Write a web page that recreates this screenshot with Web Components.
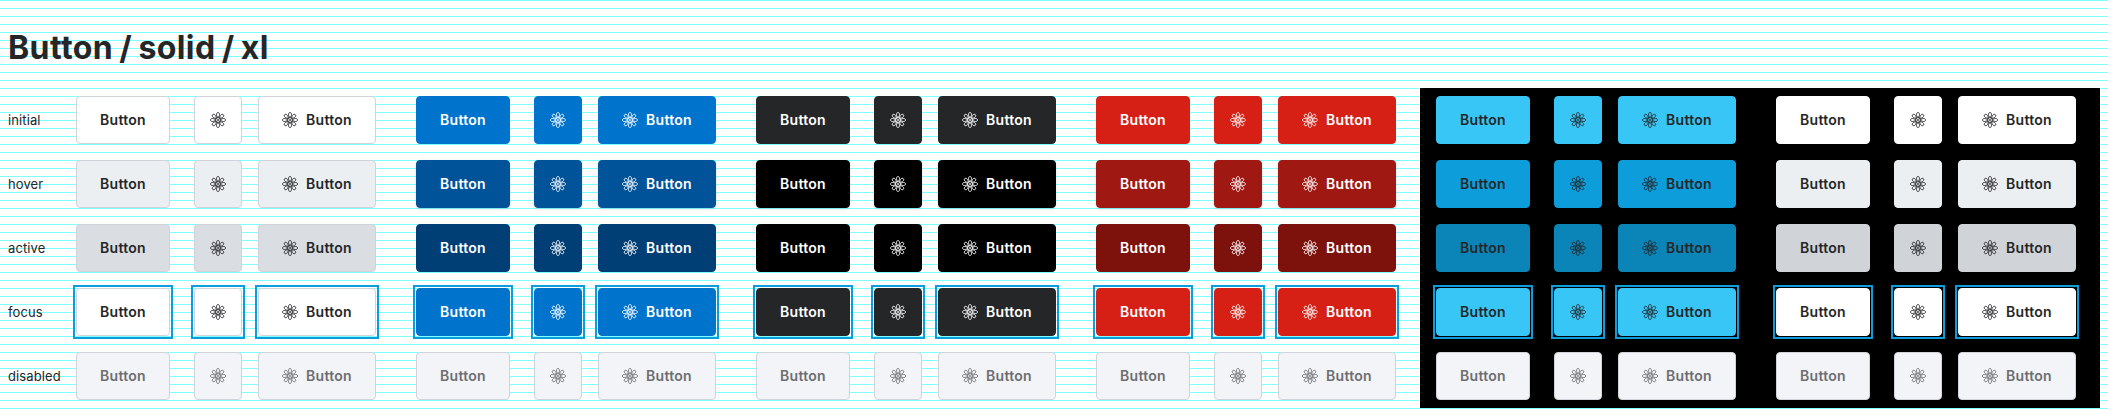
<!DOCTYPE html>
<html lang="en">
<head>
<meta charset="utf-8">
<title>Button / solid / xl</title>
<style>
html,body{margin:0;background:#fff}
body{font-family:Inter,sans-serif;color:#252628}
</style>
</head>
<body>
<story-page heading="Button / solid / xl"></story-page>
<script>
const PETALS = [0, 45, 90, 135, 180, 225, 270, 315].map(a =>
  `<path d="M8 5.6C6.8 4.5 6.5 3.3 6.5 2.4C6.5 1.3 7.1 .5 8 .5S9.5 1.3 9.5 2.4C9.5 3.3 9.2 4.5 8 5.6" transform="rotate(${a} 8 8)"/>`).join('');
const ICON = `<svg viewBox="0 0 16 16" width="16" height="16" fill="none" stroke="currentColor" stroke-width=".92" aria-hidden="true">${PETALS}<circle cx="8" cy="8" r="2.4"/><circle cx="8" cy="8" r=".9" fill="currentColor" stroke="none"/></svg>`;

customElements.define('atom-icon', class extends HTMLElement {
  constructor() {
    super();
    this.attachShadow({mode: 'open'}).innerHTML = `<style>:host{display:block;width:16px;height:16px}svg{display:block}</style>${ICON}`;
  }
});

customElements.define('solid-button', class extends HTMLElement {
  constructor() {
    super();
    this.attachShadow({mode: 'open'}).innerHTML = `<style>
:host{display:block;flex:none;height:48px}
:host([focused]){outline:2px solid #0d9ddb;outline-offset:1px}
button{display:flex;align-items:center;justify-content:center;gap:8px;box-sizing:border-box;width:var(--w);height:48px;padding:0;margin:0;
 border:1px solid var(--bd);border-radius:4px;background:var(--bg);color:var(--fg);box-shadow:var(--sh);font:600 14px/24px Inter,sans-serif;letter-spacing:.3px}
</style><button><slot></slot></button>`;
  }
});

const THEMES = {
  neutral: {fg: '#252628', bd: '#d0d4da', bg: ['#fff', '#ebeff2', '#dadde2']},
  blue: {fg: '#fff', bg: ['#0073cd', '#005299', '#003f75']},
  black: {fg: '#fff', bg: ['#252628', '#000', '#000']},
  red: {fg: '#fff', bg: ['#d62015', '#a01812', '#7d120d']},
  sky: {fg: '#252628', bg: ['#38c6f6', '#0d9ddb', '#0b84b7']},
  white: {fg: '#252628', bg: ['#fff', '#ebeff2', '#d0d3d8']}
};

customElements.define('button-group', class extends HTMLElement {
  connectedCallback() {
    const t = THEMES[this.getAttribute('theme')], s = this.getAttribute('state');
    const i = {initial: 0, hover: 1, active: 2, focus: 0}[s];
    const off = s === 'disabled';
    const bg = off ? '#f3f4f7' : t.bg[i], fg = off ? '#6d6e72' : t.fg;
    const bd = off ? '#d0d4da' : (t.bd || bg), f = s === 'focus' ? 'focused' : '';
    const sh = s === 'hover' && !t.bd ? '0 1px 3px rgba(37,38,40,.14)' : 'none';
    this.attachShadow({mode: 'open'}).innerHTML = `<style>
:host{display:flex;box-sizing:border-box;width:340px;height:64px;padding:8px 0 8px 16px;--bg:${bg};--fg:${fg};--bd:${bd};--sh:${sh}}
.text{--w:94px;margin-right:24px}.icon{--w:48px;margin-right:16px}.both{--w:118px}
</style><solid-button class="text" ${f}>Button</solid-button><solid-button class="icon" ${f}><atom-icon></atom-icon></solid-button><solid-button class="both" ${f}><atom-icon></atom-icon><span>Button</span></solid-button>`;
  }
});

customElements.define('state-row', class extends HTMLElement {
  connectedCallback() {
    const s = this.getAttribute('state');
    const g = n => `<button-group theme="${n}" state="${s}"></button-group>`;
    this.attachShadow({mode: 'open'}).innerHTML = `<style>
:host{display:flex;height:64px;width:2100px}
.label{box-sizing:border-box;width:60px;padding-left:8px;font:400 13px/64px Inter,sans-serif;letter-spacing:.1px;white-space:nowrap}
.dark{display:flex;background:#000}
</style><div class="label">${s}</div>${['neutral', 'blue', 'black', 'red'].map(g).join('')}<div class="dark">${g('sky')}${g('white')}</div>`;
  }
});

customElements.define('story-page', class extends HTMLElement {
  connectedCallback() {
    this.attachShadow({mode: 'open'}).innerHTML = `<style>
:host{display:block;height:409px;background:repeating-linear-gradient(to bottom,#7fffff 0 1px,transparent 1px 8px)}
h1{box-sizing:border-box;height:88px;margin:0;padding:28px 0 0 8px;font:700 32px/40px Inter,sans-serif;letter-spacing:.4px;word-spacing:-1.7px}
</style><h1>${this.getAttribute('heading')}</h1>${['initial', 'hover', 'active', 'focus', 'disabled'].map(s => `<state-row state="${s}"></state-row>`).join('')}`;
  }
});
</script>
</body>
</html>
